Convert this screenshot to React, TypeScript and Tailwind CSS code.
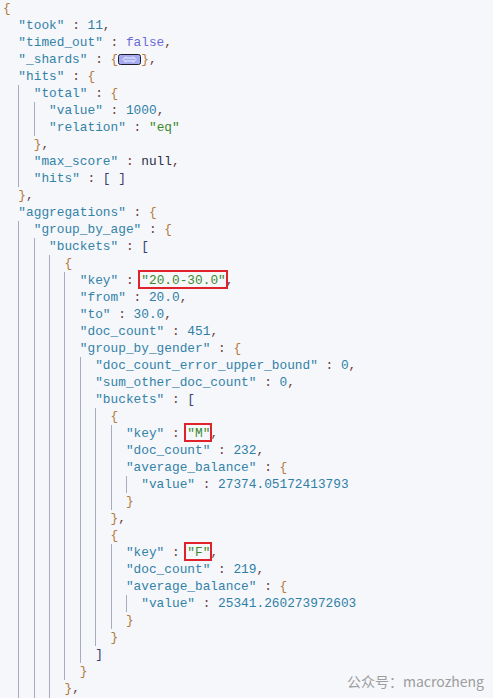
import type { ReactNode } from "react";

type N = { line: ReactNode; kids?: N[]; close?: ReactNode };

const C = {
  key: "text-[#3382a8]",
  num: "text-[#2f7fa6]",
  str: "text-[#3a8a2c]",
  pun: "text-[#6b3d3d]",
  brace: "text-[#b4793a]",
  brack: "text-[#394071]",
  bool: "text-[#6b6bd6]",
  nul: "text-[#2b2f48]",
};

const lb = <span className={C.brace}>{"{"}</span>;
const rb = <span className={C.brace}>{"}"}</span>;
const lsq = <span className={C.brack}>[</span>;
const rsq = <span className={C.brack}>]</span>;
const comma = <span className={C.pun}>,</span>;
const colon = <span className={C.pun}> : </span>;

const key = (s: string) => <span className={C.key}>"{s}"</span>;
const num = (s: string) => <span className={C.num}>{s}</span>;
const str = (s: string) => <span className={C.str}>"{s}"</span>;

// red highlight box drawn over a value
const marked = (s: string) => (
  <span className="relative">
    {str(s)}
    <span className="absolute -left-[3px] -right-[2px] -top-[3px] -bottom-[1px] border-2 border-[#e0232b]" />
  </span>
);

const leaf = (name: string, val: ReactNode, last?: boolean): N => ({
  line: (
    <>
      {key(name)}
      {colon}
      {val}
      {!last && comma}
    </>
  ),
});

const obj = (name: string, kids: N[], last?: boolean, open?: boolean): N => ({
  line: (
    <>
      {key(name)}
      {colon}
      {lb}
    </>
  ),
  kids,
  close: open ? undefined : (
    <>
      {rb}
      {!last && comma}
    </>
  ),
});

const arr = (name: string, kids: N[], last?: boolean, open?: boolean): N => ({
  line: (
    <>
      {key(name)}
      {colon}
      {lsq}
    </>
  ),
  kids,
  close: open ? undefined : (
    <>
      {rsq}
      {!last && comma}
    </>
  ),
});

const item = (kids: N[], last?: boolean): N => ({
  line: lb,
  kids,
  close: (
    <>
      {rb}
      {!last && comma}
    </>
  ),
});

function FoldWidget() {
  return (
    <svg width="23" height="11" viewBox="0 0 23 11" className="inline-block align-middle">
      <rect x="0.5" y="0.5" width="22" height="10" rx="2" fill="#a3aaf0" stroke="#1c1c2c" />
      <path d="M7 4h9M7 7h9M8 2.5 5 5.5 8 8.5M15 2.5l3 3-3 3" fill="none" stroke="#eef0ff" strokeWidth="1" />
    </svg>
  );
}

const gender = (k: string, count: string, bal: string, last?: boolean) =>
  item(
    [
      leaf("key", marked(k)),
      leaf("doc_count", num(count)),
      obj("average_balance", [leaf("value", num(bal), true)], true),
    ],
    last
  );

// the response goes on past the bottom edge; an empty row keeps the guides running
const more: N = { line: "" };

const data: N = {
  line: lb,
  kids: [
    leaf("took", num("11")),
    leaf("timed_out", <span className={C.bool}>false</span>),
    {
      line: (
        <>
          {key("_shards")}
          {colon}
          {lb}
          <FoldWidget />
          {rb}
          {comma}
        </>
      ),
    },
    obj("hits", [
      obj("total", [leaf("value", num("1000")), leaf("relation", str("eq"), true)]),
      leaf("max_score", <span className={C.nul}>null</span>),
      leaf(
        "hits",
        <>
          {lsq} {rsq}
        </>,
        true
      ),
    ]),
    obj(
      "aggregations",
      [
        obj(
          "group_by_age",
          [
            arr(
              "buckets",
              [
                item([
                  leaf("key", marked("20.0-30.0")),
                  leaf("from", num("20.0")),
                  leaf("to", num("30.0")),
                  leaf("doc_count", num("451")),
                  obj(
                    "group_by_gender",
                    [
                      leaf("doc_count_error_upper_bound", num("0")),
                      leaf("sum_other_doc_count", num("0")),
                      arr(
                        "buckets",
                        [gender("M", "232", "27374.05172413793"), gender("F", "219", "25341.260273972603", true)],
                        true
                      ),
                    ],
                    true
                  ),
                ]),
                more,
              ],
              true,
              true
            ),
          ],
          true,
          true
        ),
      ],
      true,
      true
    ),
  ],
};

function Tree({ n, top }: { n: N; top?: boolean }) {
  return (
    <>
      <div className="h-[17px] whitespace-pre">{n.line}</div>
      {n.kids && (
        <div className={top ? "pl-[15.36px]" : "border-l border-[#a8acbf] pl-[14.36px]"}>
          {n.kids.map((c, i) => (
            <Tree key={i} n={c} />
          ))}
        </div>
      )}
      {n.close && <div className="h-[17px] whitespace-pre">{n.close}</div>}
    </>
  );
}

export default function App() {
  return (
    <div className="relative h-[698px] w-[493px] overflow-hidden bg-[#f5f7fa]">
      <div className="pl-[3px] font-['Liberation_Mono',monospace] text-[12.8px] leading-[17px]">
        <Tree n={data} top />
      </div>
      <div className="absolute right-[9px] bottom-[7px] font-['Noto_Sans_CJK_SC',sans-serif] text-[14px] leading-[20px] text-[#9d9d9d]">
        公众号：macrozheng
      </div>
    </div>
  );
}
